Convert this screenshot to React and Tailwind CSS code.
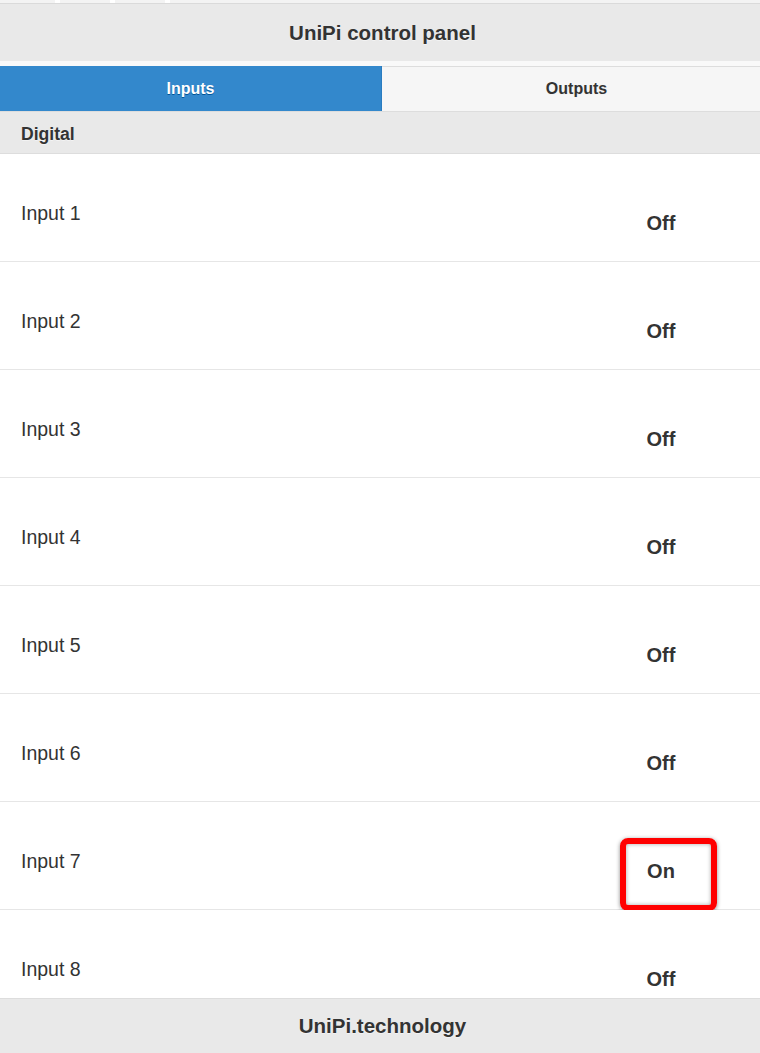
import React from "react";

const inputs = [
  { name: "Input 1", state: "Off" },
  { name: "Input 2", state: "Off" },
  { name: "Input 3", state: "Off" },
  { name: "Input 4", state: "Off" },
  { name: "Input 5", state: "Off" },
  { name: "Input 6", state: "Off" },
  { name: "Input 7", state: "On", highlight: true },
  { name: "Input 8", state: "Off" },
];

const InputRow = ({ name, state, highlight }) => (
  <li className="relative flex h-[108px] shrink-0 justify-between border-b border-[#e6e6e6] bg-white pl-[21px]">
    <span className="pt-[47px] text-[19.5px] leading-[24px] text-[#333]">{name}</span>
    <span className="w-[150px] pt-[57px] pr-[48px] text-center text-[20px] font-bold leading-[24px] text-[#333]">
      {state}
    </span>
    {highlight && (
      <div className="absolute left-[620px] top-[36px] h-[73px] w-[97px] rounded-[8px] border-[6px] border-[#ff0000] shadow-[0_1px_4px_rgba(0,0,0,0.45),inset_0_0_4px_rgba(0,0,0,0.35)]" />
    )}
  </li>
);

const App = () => {
  return (
    <div className="flex h-[1053px] flex-col overflow-hidden bg-white font-['Liberation_Sans',Arial,sans-serif] text-[#333]">
      <div className="flex h-[3px] shrink-0 bg-[#f3f3f3]">
        <span className="ml-[55px] w-[5px] bg-white" />
        <span className="ml-[50px] w-[5px] bg-white" />
        <span className="ml-[50px] w-[5px] bg-white" />
      </div>

      <header className="flex h-[58px] shrink-0 items-center justify-center border-t border-[#dadada] bg-[#e9e9e9] pt-[2px] pl-[5px] [text-shadow:0_1px_0_#f3f3f3]">
        <h1 className="text-[20.5px] font-bold">UniPi control panel</h1>
      </header>

      <div className="h-[5px] shrink-0 bg-[#f9f9f9]" />

      <nav className="grid h-[46px] shrink-0 grid-cols-[382px_1fr] border-b border-[#dddddd] text-[16px] font-bold">
        <button className="flex items-center justify-center border-r border-[#2a7cc0] bg-[#3388cc] text-white [text-shadow:0_1px_0_#005599]">
          Inputs
        </button>
        <button className="flex items-center justify-center border-t border-[#dddddd] bg-[#f6f6f6] pl-[11px] text-[#333] [text-shadow:0_1px_0_#f3f3f3]">
          Outputs
        </button>
      </nav>

      <div className="flex h-[42px] shrink-0 items-center border-b border-[#dddddd] bg-[#e9e9e9] pt-[3px] pl-[21px] text-[17.6px] font-bold [text-shadow:0_1px_0_#f3f3f3]">
        Digital
      </div>

      <ul className="flex min-h-0 flex-1 flex-col overflow-hidden">
        {inputs.map((input) => (
          <InputRow key={input.name} {...input} />
        ))}
      </ul>

      <footer className="flex h-[55px] shrink-0 items-center justify-center border-t border-[#dddddd] bg-[#e9e9e9] pl-[5px] text-[20.5px] font-bold [text-shadow:0_1px_0_#f3f3f3]">
        UniPi.technology
      </footer>
    </div>
  );
};

export default App;
